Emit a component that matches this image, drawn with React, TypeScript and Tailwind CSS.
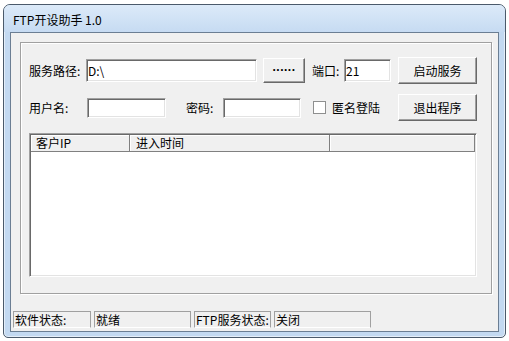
const font = "font-['Noto_Sans_CJK_SC','Noto_Sans',sans-serif]";

const Btn = ({ label, className }: { label: string; className: string }) => (
  <div
    className={`shrink-0 flex items-center justify-center bg-[#f0f0f0] border-t border-l border-b border-r border-t-white border-l-white border-b-[#696969] border-r-[#696969] shadow-[inset_-1px_-1px_0_#a0a0a0] text-[12px] leading-none text-black ${className}`}
  >
    {label}
  </div>
);

const Field = ({ value, className }: { value?: string; className: string }) => (
  <div
    className={`shrink-0 flex items-center bg-white border-t border-l border-b border-r border-t-[#a0a0a0] border-l-[#a0a0a0] border-b-white border-r-white shadow-[inset_1px_1px_0_#696969,inset_-1px_-1px_0_#e3e3e3] pl-[1px] text-[12px] leading-none text-black ${className}`}
  >
    {value}
  </div>
);

const StatusPanel = ({ text, w }: { text: string; w: string }) => (
  <div
    className={`h-[17px] ${w} flex items-center pl-[1px] border-t border-l border-r border-b border-[#a0a0a0] border-b-white text-[12px] leading-none whitespace-nowrap`}
  >
    {text}
  </div>
);

export default function App() {
  return (
    <div className={`w-[509px] h-[341px] bg-white pl-[3px] pt-[4px] ${font} text-black`}>
      <div className="w-[503px] h-[334px] flex flex-col rounded-t-[7px] rounded-b-[5px] border border-[#4b5a6b] bg-[#c3d9f1] shadow-[inset_0_0_0_1px_rgba(255,255,255,0.55)] overflow-hidden">
        {/* title bar */}
        <div className="h-[27px] flex items-center pl-[9px] pt-[2px] bg-linear-to-b from-[#dceaf9] to-[#c6dbf2] text-[12px] leading-none">
          FTP开设助手 1.0
        </div>

        {/* client area */}
        <div className="mx-[6px] h-[300px] flex flex-col border border-[#6b7e93] bg-[#f0f0f0]">
          {/* group box */}
          <div className="ml-[9px] mt-[9px] w-[472px] h-[252px] border border-[#a0a0a0] shadow-[inset_1px_1px_0_#fff,1px_1px_0_#fff] flex flex-col pl-[8px] pr-[14px]">
            <div className="mt-[14px] h-[27px] flex items-center">
              <span className="w-[57px] shrink-0 text-[12px] leading-none">服务路径:</span>
              <Field value="D:\" className="w-[171px] h-[23px]" />
              <Btn
                label="......"
                className="ml-[6px] w-[42px] h-[25px] pb-[7px] font-['Liberation_Sans',sans-serif] font-bold tracking-[0.5px]"
              />
              <span className="ml-[7px] w-[32px] shrink-0 text-[12px] leading-none">端口:</span>
              <Field value="21" className="w-[47px] h-[23px]" />
              <Btn label="启动服务" className="ml-auto w-[79px] h-[27px]" />
            </div>

            <div className="mt-[10px] h-[27px] flex items-center">
              <span className="w-[58px] shrink-0 text-[12px] leading-none">用户名:</span>
              <Field className="w-[79px] h-[20px]" />
              <span className="ml-[20px] w-[37px] shrink-0 text-[12px] leading-none">密码:</span>
              <Field className="w-[78px] h-[20px]" />
              <div className="ml-[12px] shrink-0 w-[13px] h-[13px] bg-white border border-[#8e8f8f]" />
              <span className="ml-[6px] text-[12px] leading-none">匿名登陆</span>
              <Btn label="退出程序" className="ml-auto w-[79px] h-[27px]" />
            </div>

            {/* list view */}
            <div className="mt-[12px] w-[448px] h-[144px] flex flex-col bg-white border-t border-l border-b border-r border-t-[#a0a0a0] border-l-[#a0a0a0] border-b-white border-r-white shadow-[inset_1px_1px_0_#696969,inset_-1px_-1px_0_#e3e3e3] pl-[1px] pt-[1px]">
              <div className="h-[17px] flex text-[12px] leading-none">
                <div className="w-[99px] flex items-center pl-[5px] bg-[#f0f0f0] border-r border-b border-[#808080] shadow-[inset_1px_1px_0_#fff]">
                  客户IP
                </div>
                <div className="w-[200px] flex items-center pl-[6px] bg-[#f0f0f0] border-r border-b border-[#808080] shadow-[inset_1px_1px_0_#fff]">
                  进入时间
                </div>
                <div className="flex-1 mr-[1px] bg-[#f0f0f0] border-r border-b border-[#808080] shadow-[inset_1px_1px_0_#fff]" />
              </div>
            </div>
          </div>

          {/* status bar */}
          <div className="mt-[17px] ml-[2px] flex gap-[3px]">
            <StatusPanel text="软件状态:" w="w-[78px]" />
            <StatusPanel text="就绪" w="w-[97px]" />
            <StatusPanel text="FTP服务状态:" w="w-[77px]" />
            <StatusPanel text="关闭" w="w-[97px]" />
          </div>
        </div>
      </div>
    </div>
  );
}
